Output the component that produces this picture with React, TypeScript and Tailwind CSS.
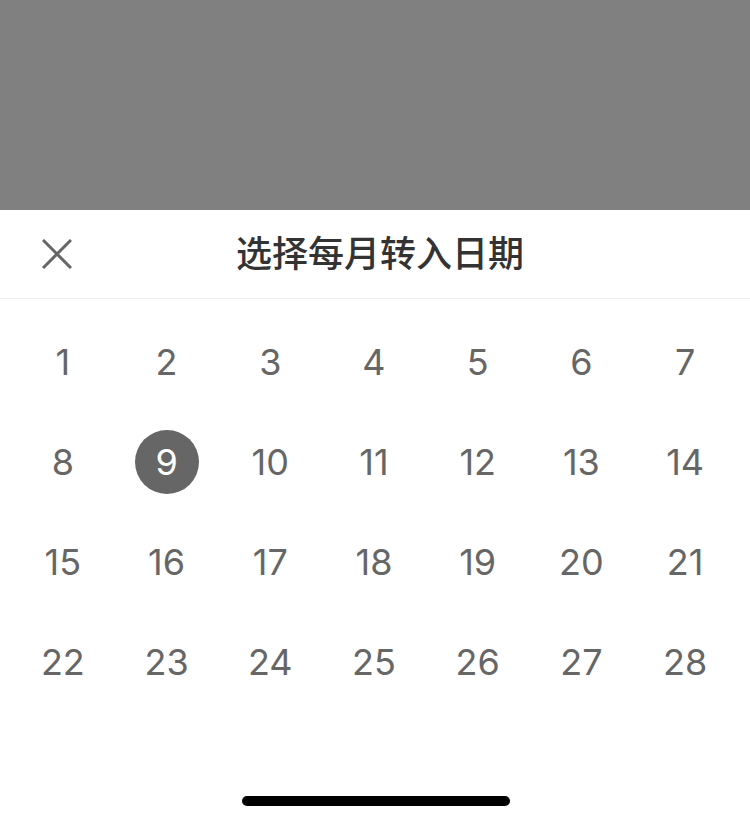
const days = Array.from({ length: 28 }, (_, i) => i + 1);

export default function App() {
  const selected = 9;
  return (
    <div className="min-h-screen h-[824px] bg-white flex flex-col" style={{ fontFamily: '"Inter", "Noto Sans CJK SC", sans-serif' }}>
      <div className="h-[210px] bg-[#808080] shrink-0" />
      <div className="h-[89px] shrink-0 border-b border-[#eeeeee] flex items-center relative">
        <button className="ml-[42px] w-[30px] h-[30px] flex items-center justify-center text-[#666666]">
          <svg width="30" height="30" viewBox="0 0 30 30" fill="none" stroke="currentColor" strokeWidth="3">
            <path d="M1 1 L29 29 M29 1 L1 29" />
          </svg>
        </button>
        <h1 className="absolute left-0 right-0 text-center pl-[10px] text-[36px] font-medium text-[#333333] leading-none pointer-events-none">
          选择每月转入日期
        </h1>
      </div>
      <div className="grid grid-cols-7 pl-[11px] pr-[13px] pt-[13px]">
        {days.map((d) => (
          <div key={d} className="h-[100px] flex items-center justify-center">
            {d === selected ? (
              <span className="w-[64px] h-[64px] rounded-full bg-[#666666] text-white flex items-center justify-center text-[36px] leading-none">
                {d}
              </span>
            ) : (
              <span className="text-[36px] text-[#666666] leading-none">{d}</span>
            )}
          </div>
        ))}
      </div>
      <div className="mt-[84px] ml-[242px] w-[268px] h-[10px] rounded-full bg-black" />
    </div>
  );
}
